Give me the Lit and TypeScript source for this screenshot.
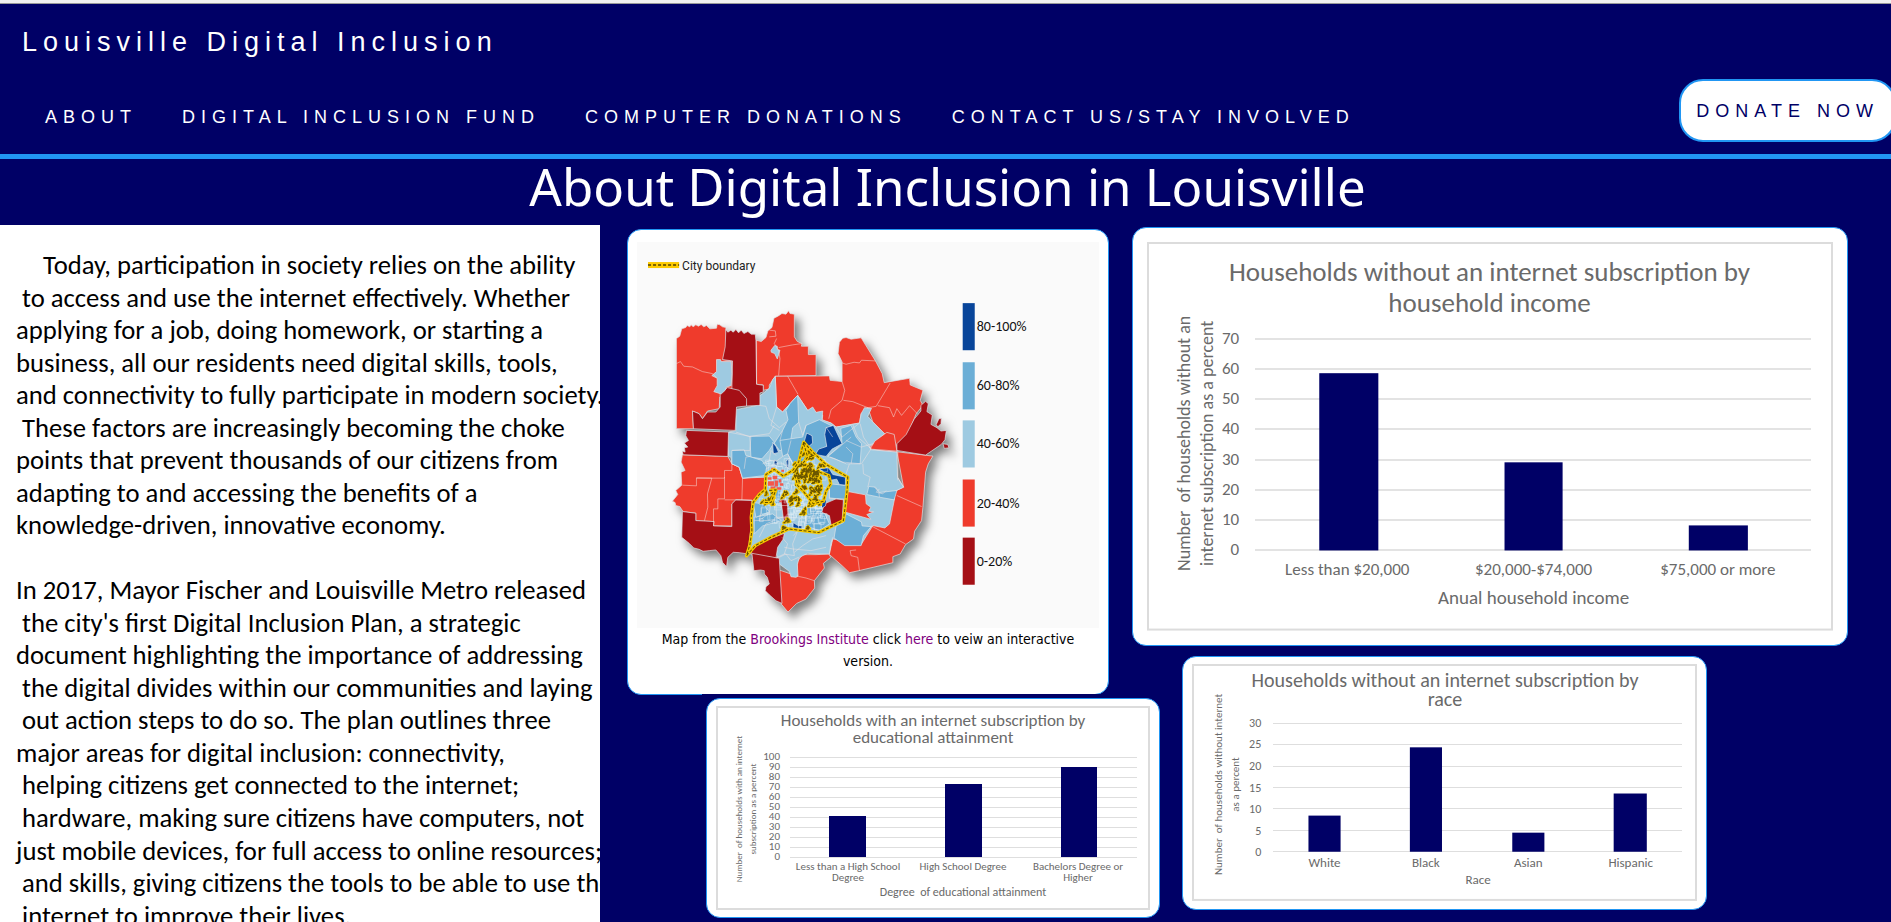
import { LitElement, html, svg, css } from "lit";
import { customElement, property } from "lit/decorators.js";

interface Bar { x: number; w: number; top: number; cx: number; label: string[]; }
interface ChartSpec {
  width: number;
  height: number;
  title: string[];
  titleSize: number;
  titleX: number;
  titleY: number[];
  ticks: number[];
  tickSize: number;
  tickX: number;
  tickDrop: number;
  left: number;
  right: number;
  top: number;
  bottom: number;
  bars: Bar[];
  labelSize: number;
  labelY: number;
  labelStep: number;
  xTitle: string;
  xTitleSize: number;
  xTitleX: number;
  xTitleY: number;
  yTitle: string[];
  yTitleSize: number;
  yTitleX: number[];
  yTitleY: number;
}

const NB = "\u00a0";

const income: ChartSpec = {
  width: 685, height: 388,
  title: ["Households without an internet subscription by", "household income"],
  titleSize: 27, titleX: 342, titleY: [39, 70],
  ticks: [70, 60, 50, 40, 30, 20, 10, 0], tickSize: 17, tickX: 92, tickDrop: 5,
  left: 108, right: 663, top: 97, bottom: 308,
  bars: [
    { x: 172, w: 59, top: 131, cx: 200, label: ["Less than $20,000"] },
    { x: 357, w: 58, top: 220, cx: 386, label: ["$20,000-$74,000"] },
    { x: 541, w: 59, top: 283, cx: 570, label: ["$75,000 or more"] },
  ],
  labelSize: 17, labelY: 333, labelStep: 20,
  xTitle: "Anual household income", xTitleSize: 19, xTitleX: 386, xTitleY: 361,
  yTitle: [`Number ${NB}of households without an`, "internet subscription as a percent"],
  yTitleSize: 18, yTitleX: [43, 66], yTitleY: 201,
};

const education: ChartSpec = {
  width: 434, height: 204,
  title: ["Households with an internet subscription by", "educational attainment"],
  titleSize: 17, titleX: 217, titleY: [20, 37],
  ticks: [100, 90, 80, 70, 60, 50, 40, 30, 20, 10, 0], tickSize: 11, tickX: 64, tickDrop: 3,
  left: 74, right: 421, top: 51, bottom: 151,
  bars: [
    { x: 113, w: 37, top: 110, cx: 132, label: ["Less than a High School", "Degree"] },
    { x: 229, w: 37, top: 78, cx: 247, label: ["High School Degree"] },
    { x: 345, w: 36, top: 61, cx: 362, label: ["Bachelors Degree or", "Higher"] },
  ],
  labelSize: 11, labelY: 164, labelStep: 11,
  xTitle: `Degree ${NB}of educational attainment`, xTitleSize: 12, xTitleX: 247, xTitleY: 190,
  yTitle: [`Number ${NB}of households with an internet`, "subscription as a percent"],
  yTitleSize: 9, yTitleX: [26, 40], yTitleY: 103,
};

const race: ChartSpec = {
  width: 503, height: 236,
  title: ["Households without an internet subscription by", "race"],
  titleSize: 20, titleX: 252, titleY: [23, 42],
  ticks: [30, 25, 20, 15, 10, 5, 0], tickSize: 12, tickX: 69, tickDrop: 4,
  left: 81, right: 488, top: 59, bottom: 187,
  bars: [
    { x: 116, w: 32, top: 151, cx: 132, label: ["White"] },
    { x: 217, w: 32, top: 83, cx: 233, label: ["Black"] },
    { x: 319, w: 32, top: 168, cx: 335, label: ["Asian"] },
    { x: 420, w: 33, top: 129, cx: 437, label: ["Hispanic"] },
  ],
  labelSize: 13, labelY: 202, labelStep: 12,
  xTitle: "Race", xTitleSize: 13, xTitleX: 285, xTitleY: 219,
  yTitle: [`Number ${NB}of households without internet`, "as a percent"],
  yTitleSize: 11, yTitleX: [30, 47], yTitleY: 120,
};

@customElement("bar-chart")
export class BarChart extends LitElement {
  @property({ attribute: false }) spec!: ChartSpec;

  static styles = css`
    :host { display: block; }
    .chart { display: block; width: 100%; height: auto; font-family: Carlito, Calibri, Lato, sans-serif; }
    .frame { fill: #fff; stroke: #dcdcdc; stroke-width: 2; }
    .grid { stroke: #dedede; stroke-width: 1; shape-rendering: crispEdges; }
    .wide .grid { stroke-width: 2; stroke: #e3e3e3; }
    .bar { fill: #000066; }
    .text { fill: #6a6a6a; text-anchor: middle; }
    .tick { fill: #6a6a6a; text-anchor: end; }
  `;

  render() {
    const s = this.spec;
    const step = (s.bottom - s.top) / (s.ticks.length - 1);
    return html`
      <svg class="chart ${s.width > 600 ? "wide" : ""}" viewBox="0 0 ${s.width} ${s.height}" role="img" aria-label=${s.title.join(" ")}>
        <rect class="frame" x="1" y="1" width=${s.width - 2} height=${s.height - 2}></rect>
        ${s.title.map((t, i) => svg`<text class="text" font-size=${s.titleSize} x=${s.titleX} y=${s.titleY[i]}>${t}</text>`)}
        ${s.ticks.map((t, i) => {
          const y = Math.round(s.top + i * step);
          return svg`
            <line class="grid" x1=${s.left} x2=${s.right} y1=${y} y2=${y}></line>
            <text class="tick" font-size=${s.tickSize} x=${s.tickX} y=${y + s.tickDrop}>${t}</text>`;
        })}
        ${s.bars.map((b) => svg`
          <rect class="bar" x=${b.x} y=${b.top} width=${b.w} height=${s.bottom - b.top}></rect>
          ${b.label.map((l, i) => svg`<text class="text" font-size=${s.labelSize} x=${b.cx} y=${s.labelY + i * s.labelStep}>${l}</text>`)}`)}
        <text class="text" font-size=${s.xTitleSize} x=${s.xTitleX} y=${s.xTitleY}>${s.xTitle}</text>
        ${s.yTitle.map((t, i) => svg`<text class="text" font-size=${s.yTitleSize} transform="translate(${s.yTitleX[i]} ${s.yTitleY}) rotate(-90)">${t}</text>`)}
      </svg>`;
  }
}

const RED = "#ef3b2c", DARK = "#a50f15", LIGHT = "#9ecae1", MID = "#6baed6", DEEP = "#08459a";

/* Census tracts, drawn from the widest areas down to the smallest. */
const tracts: [string, string][] = [
  [RED, "52,145 62,138 68,116 80,112 84,106 92,110 96,104 102,110 110,104 118,108 126,103 134,110 142,106 152,116 172,114 174,102 182,104 190,110 200,112 202,170 192,208 218,212 220,298 182,320 180,355 145,362 130,385 120,370 100,362 103,415 52,415"],
  [RED, "290,150 306,154 320,142 326,122 338,112 344,84 356,78 368,70 380,72 388,62 392,70 405,72 405,140 414,154 428,160 426,168 447,168 447,193 470,193 470,256 348,258 330,284 330,296 312,300 312,284 292,282"],
  [RED, "348,258 510,257 512,270 548,274 548,215 536,190 540,156 550,144 560,142 575,147 605,143 648,212 668,250 674,277 750,264 752,284 766,290 790,300 782,330 790,345 770,370 745,430 712,462 712,486 650,480 628,470 675,430 640,395 625,352 605,370 600,398 530,410 515,398 488,390 490,375 445,360 415,315 370,365 352,350"],
  [RED, "712,484 820,497 806,520 798,545 790,650 786,690 765,722 762,745 738,762 722,790 700,798 700,816 598,840 570,846 548,825 508,790 520,740 640,705 700,605 732,590"],
  [RED, "70,493 206,498 218,520 240,530 250,563 320,558 320,600 280,630 230,628 218,640 218,706 163,706 163,693 110,690 110,668 72,663 62,648 50,645 48,636 40,632 56,612 50,600 68,584 66,545 78,540 66,515"],
  [RED, "360,838 412,856 414,812 430,792 470,792 508,790 514,800 492,818 495,832 465,870 466,892 440,925 412,938 386,964 366,940"],
  [LIGHT, "348,258 352,350 370,365 415,315 445,360 460,350 470,366 490,362 488,388 515,398 530,410 600,398 605,370 615,352 636,354 625,378 640,395 675,430 630,470 635,478 712,485 714,560 732,590 700,605 705,625 690,700 676,712 640,705 605,762 520,745 510,790 470,790 445,788 420,800 414,822 416,856 410,860 395,858 390,842 360,820 352,790 355,770 375,730 280,770 272,790 278,640 320,600 320,560 250,563 240,530 218,520 215,500 208,498 208,425 230,420 230,358 290,346 300,318 330,294 340,268"],
  [DARK, "200,118 206,126 215,120 222,126 230,118 238,128 246,120 254,130 266,124 276,132 288,132 290,150 292,282 312,285 312,305 302,308 302,345 262,347 258,322 240,303 218,298 220,212 190,208 198,170"],
  [DARK, "205,292 240,300 262,325 262,347 232,350 228,420 103,415 100,362 120,370 130,385 145,365 170,365 183,350 183,310"],
  [DARK, "82,420 208,425 206,498 72,493 70,482 78,485 76,472 86,470 76,458 88,450 80,436"],
  [DARK, "70,663 110,668 110,690 165,693 163,706 218,708 218,640 230,628 278,630 274,720 266,790 240,786 222,785 206,800 202,828 190,815 185,795 170,778 150,780 132,782 120,776 104,772 90,758 68,740"],
  [DARK, "280,765 375,728 372,745 355,770 350,802 275,792"],
  [DARK, "278,788 360,803 362,840 368,938 350,930 330,912 318,900 320,888 330,880 324,860 315,850 315,840 304,838 284,840"],
  [DARK, "764,386 784,362 784,345 798,333 806,340 802,364 818,374 814,402 832,412 844,422 860,420 856,448 845,462 798,494 712,480 712,460 740,432"],
  [DARK, "838,385 845,384 844,400 834,410 830,402"],
  [DARK, "850,460 864,462 868,472 854,474"],
  [LIGHT, "172,208 184,208 186,214 216,214 218,250 216,286 202,290 198,300 186,311 164,304 174,286 174,264 158,256 172,244"],
  [LIGHT, "335,180 346,166 354,168 354,178 362,180 354,206 346,190 336,186"],
  [MID, "392,340 415,315 418,396 400,412 394,450 362,482 345,458 370,420 386,388 380,360"],
  [MID, "272,438 330,437 345,455 330,480 308,505 275,500"],
  [MID, "218,480 255,478 260,495 308,510 322,530 318,555 250,563 240,530 218,520"],
  [MID, "362,450 430,440 440,405 480,388 520,408 500,470 470,500 430,520 400,518 385,490 370,498"],
  [MID, "544,414 575,405 590,440 606,460 602,520 560,520 524,504 505,498 548,460"],
  [MID, "510,580 564,585 562,628 510,622"],
  [MID, "560,670 606,694 608,706 635,708 612,735 605,765 556,765 524,742 530,706 552,696"],
  [MID, "628,588 648,590 660,606 712,600 704,628 660,620 622,612"],
  [MID, "285,680 340,670 366,690 310,706 285,730"],
  [MID, "440,650 490,655 510,700 480,720 440,706"],
  [MID, "282,636 312,640 330,664 290,680"],
  [MID, "330,600 366,596 362,640 336,644"],
  [RED, "565,603 618,613 620,640 634,650 628,662 642,664 622,672 634,686 558,665"],
  [RED, "632,476 646,452 682,426 704,432 712,482"],
  [DARK, "365,628 382,628 390,685 373,690"],
  [DARK, "495,640 530,625 552,628 548,692 515,703 510,675 487,665"],
  [DEEP, "442,428 458,436 460,458 446,470 434,456"],
  [DEEP, "500,412 522,405 548,460 518,476 500,498 468,492 478,476 502,468 496,432"],
  [DEEP, "340,456 350,468 358,486 342,490"],
  [DEEP, "478,535 508,532 520,552 558,560 558,584 540,582 532,566 508,570 500,550"],
  [DEEP, "490,630 502,628 498,646 485,654"],
  [DEEP, "402,696 414,704 430,706 428,715 400,711"],
  [DEEP, "380,512 388,504 388,530 382,530"],
  [DEEP, "346,508 354,514 352,526 344,520"],
];

const borders = [
  "M52,220 64,214 74,228 100,230 130,244 160,250 172,262", "M292,150V282", "M352,145 345,160 358,180 362,205 358,256",
  "M358,172 400,164 428,160", "M385,258 416,312", "M548,218 560,222 584,216 600,218 606,210 648,212",
  "M548,274 556,300 548,330 515,358 508,385", "M552,330 580,334 625,352 650,348 692,278", "M655,346 690,352 702,380 712,355 726,375 750,346 775,372",
  "M715,484V570", "M712,615 786,648", "M635,706 738,760", "M600,840 595,800 575,795 572,780 590,778", "M715,562 732,590",
  "M70,584 112,586 112,562 158,563", "M158,563 145,610 146,650 136,690", "M112,563H196V540H218V520", "M196,560V625H176V655H163V706",
  "M196,628H278", "M250,563 248,628", "M330,120 348,122 350,138 330,140", "M300,345 320,348 330,385 360,412 380,395",
  "M345,405 330,430 272,438 208,425", "M230,425 275,440 272,480 218,480", "M272,498 260,500 255,535", "M352,350 335,405 360,420",
  "M418,395 430,435 440,405", "M530,412 548,440 600,398", "M580,402 595,440 635,475 606,520", "M560,450 605,470 640,460",
  "M610,520 612,550 632,560 625,590", "M570,520 560,550 565,603", "M602,400 612,440 635,475", "M520,440 500,410",
  "M505,498 540,470 575,440", "M512,500 550,515 605,520", "M560,470 580,490 575,520", "M402,735 415,720 400,760 405,795 375,790 350,802",
  "M405,785 430,765 460,745 500,735", "M375,770 400,775 455,780 500,770", "M360,800 380,790 395,810 418,800", "M368,740 385,760 375,790",
  "M412,856 440,862 465,870", "M510,790 514,760 520,740", "M475,500 510,520", "M395,450 385,490 400,520", "M370,420 362,450",
  "M440,470 465,500", "M330,510 352,512 370,498", "M310,520 330,510 335,480 350,495", "M320,536 345,520 372,520 395,540",
  "M440,640V700", "M460,640 465,720", "M310,640 300,690 330,668 340,600", "M350,640 352,680 410,680", "M395,640 420,650 418,710",
  "M510,585V625H562", "M285,690H330L370,680", "M300,740 320,700 345,690", "M395,580 405,630 430,640 480,645", "M355,645H430", "M370,600 385,640",
  "M660,595 650,605 670,610 680,600", "M645,590 658,606 660,620",
];

/* Street-scale tract outlines around downtown. */
const mesh = (() => {
  let seed = 7;
  const rnd = () => (seed = (seed * 16807) % 2147483647) / 2147483647;
  const out: string[] = [];
  for (let i = 0; i < 150; i++) {
    const x = Math.round(300 + rnd() * 190);
    const y = Math.round(500 + rnd() * 200);
    const w = Math.round(6 + rnd() * 16);
    const h = Math.round(6 + rnd() * 16);
    if (x + (y - 500) / 5 < 320) continue;
    out.push(`M${x},${y}h${w}l${Math.round(rnd() * 6 - 3)},${h}h-${w}z`);
  }
  return out.join("");
})();

const suburbs = (() => {
  let seed = 23;
  const rnd = () => (seed = (seed * 16807) % 2147483647) / 2147483647;
  const spots: [number, number, number, number][] = [
    [408, 515, 70, 50], [405, 545, 80, 30], [430, 580, 60, 30], [445, 610, 36, 26], [312, 600, 34, 36],
    [384, 610, 36, 26], [372, 602, 10, 10], [434, 652, 10, 14], [380, 682, 8, 6], [366, 706, 10, 6],
    [440, 704, 8, 8], [432, 475, 36, 34], [480, 515, 20, 10], [405, 592, 10, 14],
  ];
  return spots.map(([x, y, w, h]) => {
    const n = Math.max(3, Math.round((w * h) / 110));
    let d = "";
    for (let i = 0; i < n; i++) {
      const px = Math.round(x + rnd() * w), py = Math.round(y + rnd() * h);
      d += `M${px},${py}l${Math.round(rnd() * 10 - 3)},${Math.round(4 + rnd() * 5)}l-${Math.round(4 + rnd() * 6)},${Math.round(rnd() * 4)}z`;
    }
    return d;
  }).join("");
})();

const cityLine =
  "M433,455 460,485 500,522 565,560 563,600 552,690 478,726 388,715 335,740 288,765 262,795 272,762 278,720 276,680 282,635 300,612 318,596 320,552 345,537 372,557 400,540 418,515Z";
const innerLine = "M480,545 508,555 514,580 500,602 492,632 462,640 446,620 430,600 415,585 408,560M433,460 445,500 430,520M330,600 350,598 335,636 312,636";
const downtown = "M325,560h12v8h-12zM340,556h14v10h-14zM326,572h18v14h-18zM346,570h10v18h-10zM358,566h8v10h-8zM334,588h14v8h-14zM352,590h14v8h-14zM342,600h8v10h-8zM362,578h10v8h-10zM336,532h10v6h-10zM366,538h8v6h-8zM340,622h6v6h-6zM360,630h8v5h-8z";

const legend: [string, string][] = [
  [DEEP, "80-100%"], [MID, "60-80%"], [LIGHT, "40-60%"], [RED, "20-40%"], [DARK, "0-20%"],
];

@customElement("coverage-map")
export class CoverageMap extends LitElement {
  static styles = css`
    :host { display: block; }
    .map { display: block; width: 100%; height: auto; background: #fafafa; }
    .land { filter: drop-shadow(5px 6px 5px rgba(0, 0, 0, 0.5)); }
    .tract { stroke: #dfe6ea; stroke-width: 2; stroke-linejoin: round; }
    .border { fill: none; stroke: #f3e3e0; stroke-width: 2; opacity: 0.75; }
    .mesh { fill: none; stroke: #e6f1f8; stroke-width: 2; opacity: 0.65; }
    .downtown { fill: #f4574b; }
    .city { fill: none; stroke: #f5c800; stroke-width: 10; stroke-linejoin: round; }
    .dash { fill: none; stroke: #5f4d00; stroke-width: 3; stroke-dasharray: 9 5; }
    .spot { fill: none; stroke: #f5c800; stroke-width: 9; stroke-linejoin: round; }
    .spot-dash { fill: none; stroke: #6a5600; stroke-width: 4; stroke-dasharray: 7 4; }
    .key { fill: #222; font: 12px Roboto, "Liberation Sans", Arial, sans-serif; }
    .band { fill: #111; font: 14px Carlito, Calibri, sans-serif; }
  `;

  render() {
    return html`
      <svg class="map" viewBox="0 0 461 385" role="img" aria-label="Households with internet access by area, with city boundary">
        <line x1="11" x2="42" y1="23" y2="23" stroke="#fdca00" stroke-width="6"></line>
        <line x1="11" x2="42" y1="23" y2="23" stroke="#7a6200" stroke-width="2" stroke-dasharray="3 2"></line>
        <text class="key" x="45" y="28">City boundary</text>
        ${legend.map(([c, t], i) => svg`
          <rect x="325" y=${Math.round(61 + i * 58.5)} width="12" height="47" fill=${c}></rect>
          <text class="band" x="339" y=${Math.round(89 + i * 58.5)}>${t}</text>`)}
        <g class="land">
          <g transform="translate(22 48) scale(0.3333)">
            ${tracts.map(([c, p]) => svg`<polygon class="tract" fill=${c} points=${p}></polygon>`)}
            <path class="border" d=${borders.join("")}></path>
            <path class="mesh" d=${mesh}></path>
            <path class="downtown" d=${downtown}></path>
            <path class="spot" d=${suburbs}></path>
            <path class="spot-dash" d=${suburbs}></path>
            <path class="city" d=${cityLine + innerLine}></path>
            <path class="dash" d=${cityLine + innerLine}></path>
          </g>
        </g>
      </svg>`;
  }
}

const intro = [
  "    Today, participation in society relies on the ability",
  " to access and use the internet effectively. Whether",
  "applying for a job, doing homework, or starting a",
  "business, all our residents need digital skills, tools,",
  "and connectivity to fully participate in modern society.",
  " These factors are increasingly becoming the choke",
  "points that prevent thousands of our citizens from",
  "adapting to and accessing the benefits of a",
  "knowledge-driven, innovative economy.",
].join("\n");

const plan = [
  "In 2017, Mayor Fischer and Louisville Metro released",
  " the city's first Digital Inclusion Plan, a strategic",
  "document highlighting the importance of addressing",
  " the digital divides within our communities and laying",
  " out action steps to do so. The plan outlines three",
  "major areas for digital inclusion: connectivity,",
  " helping citizens get connected to the internet;",
  " hardware, making sure citizens have computers, not",
  "just mobile devices, for full access to online resources;",
  " and skills, giving citizens the tools to be able to use the",
  " internet to improve their lives.",
].join("\n");

@customElement("app-root")
export class AppRoot extends LitElement {
  static styles = css`
    :host {
      display: flex;
      flex-direction: column;
      height: 100vh;
      overflow: hidden;
      background: #000066;
      color: #fff;
      font-family: "Liberation Sans", Arial, sans-serif;
    }
    .strip { flex: none; height: 3px; background: #f1f1f1; border-bottom: 1px solid #999; }
    .header { flex: none; padding: 18px 0 12px; border-bottom: 5px solid #2196f3; letter-spacing: 6px; }
    .brand { display: block; padding-left: 22px; font-size: 27px; line-height: 40px; }
    .row { display: flex; justify-content: space-between; align-items: center; margin-top: 17px; padding-left: 45px; }
    .nav { display: flex; gap: 45px; padding-top: 14px; font-size: 18px; line-height: 27px; white-space: nowrap; }
    a { color: inherit; text-decoration: none; }
    .donate {
      margin-right: -5px;
      padding: 18px 15px 16px;
      border: 2px solid #2196f3;
      border-radius: 24px;
      background: #fff;
      color: #000066;
      font: 18px/25px "Liberation Sans", Arial, sans-serif;
      letter-spacing: 6px;
      white-space: nowrap;
    }
    .title {
      flex: none;
      margin: 0;
      padding: 0 0 12px 4px;
      text-align: center;
      font: 400 51px/54px "Noto Sans", "Open Sans", sans-serif;
    }
    .main {
      flex: 1;
      min-height: 0;
      display: grid;
      grid-template-columns: minmax(0, 600fr) minmax(0, 532fr) minmax(0, 759fr);
    }
    .article {
      overflow: hidden;
      padding: 24px 0 0 16px;
      background: #fff;
      color: #000;
      font: 20pt/1.22 Carlito, Calibri, Lato, sans-serif;
      white-space: pre;
    }
    .article p { margin: 0; }
    .article p:first-child { text-indent: 3px; }
    .article p + p { margin-top: 1lh; }
    .card {
      margin: 0;
      border: 1px solid #2196f3;
      border-radius: 14px;
      background: #fff;
      color: #000;
    }
    .map-card { margin: 4px 23px 0 27px; padding: 12px 9px 22px; }
    .caption {
      text-align: center;
      font: 14px/22px "DejaVu Sans Condensed", Tahoma, sans-serif;
    }
    .caption a { color: #800080; }
    .backdrop { margin: -1px -28px 0 102px; padding: 4px 0 0 4px; background: #000066; position: relative; }
    .education { padding: 7px 9px; }
    .income { margin: 2px 43px 0 0; padding: 14px; }
    .race { margin: 10px 184px 0 50px; padding: 7px 9px 8px; }
  `;

  render() {
    return html`
      <div class="strip"></div>
      <header class="header">
        <a class="brand" href="#home">Louisville Digital Inclusion</a>
        <div class="row">
          <nav class="nav">
            <a href="#about">ABOUT</a>
            <a href="#fund">DIGITAL INCLUSION FUND</a>
            <a href="#donations">COMPUTER DONATIONS</a>
            <a href="#contact">CONTACT US/STAY INVOLVED</a>
          </nav>
          <button class="donate" type="button">DONATE NOW</button>
        </div>
      </header>
      <h1 class="title">About Digital Inclusion in Louisville</h1>
      <main class="main">
        <article class="article"><p>${intro}</p><p>${plan}</p></article>
        <section>
          <figure class="card map-card">
            <coverage-map></coverage-map>
            <figcaption class="caption">
              Map from the <a href="#brookings">Brookings Institute</a> click <a href="#map">here</a> to veiw an interactive version.
            </figcaption>
          </figure>
          <div class="backdrop">
            <div class="card education"><bar-chart .spec=${education}></bar-chart></div>
          </div>
        </section>
        <section>
          <div class="card income"><bar-chart .spec=${income}></bar-chart></div>
          <div class="card race"><bar-chart .spec=${race}></bar-chart></div>
        </section>
      </main>`;
  }
}
